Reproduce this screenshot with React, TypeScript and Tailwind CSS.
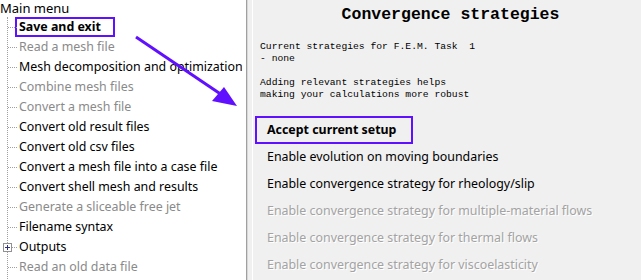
import React from "react";

const items: { t: string; d?: boolean; b?: boolean; plus?: boolean }[] = [
  { t: "Save and exit", b: true },
  { t: "Read a mesh file", d: true },
  { t: "Mesh decomposition and optimization" },
  { t: "Combine mesh files", d: true },
  { t: "Convert a mesh file", d: true },
  { t: "Convert old result files" },
  { t: "Convert old csv files" },
  { t: "Convert a mesh file into a case file" },
  { t: "Convert shell mesh and results" },
  { t: "Generate a sliceable free jet", d: true },
  { t: "Filename syntax" },
  { t: "Outputs", plus: true },
  { t: "Read an old data file", d: true },
];

const opts: { t: string; d?: boolean }[] = [
  { t: "Enable evolution on moving boundaries" },
  { t: "Enable convergence strategy for rheology/slip" },
  { t: "Enable convergence strategy for multiple-material flows", d: true },
  { t: "Enable convergence strategy for thermal flows", d: true },
  { t: "Enable convergence strategy for viscoelasticity", d: true },
];

export default function App() {
  return (
    <div
      className="relative flex h-[280px] w-[641px] overflow-hidden bg-[#f0f0f0] text-[12.4px] text-black"
      style={{ fontFamily: '"Noto Sans", "Open Sans", sans-serif' }}
    >
      <div className="w-[246px] shrink-0 bg-white">
        <div className="h-[17px] pl-0 text-[13px] leading-[17px]">Main menu</div>
        <div className="relative">
          <div className="absolute left-[7px] top-0 h-[280px] border-l border-dotted border-[#a0a0a0]" />
          {items.map((it, i) => (
            <div key={i} className="relative flex h-[20px] items-center">
              <div className="absolute left-[8px] top-[10px] w-[9px] border-t border-dotted border-[#a0a0a0]" />
              {it.plus && (
                <div className="absolute left-[3px] top-[6px] flex h-[9px] w-[9px] items-center justify-center border border-[#919191] bg-white">
                  <div className="absolute h-[1px] w-[5px] bg-[#303080]" />
                  <div className="absolute h-[5px] w-[1px] bg-[#303080]" />
                </div>
              )}
              {it.b ? (
                <div className="ml-[15px] flex h-[20px] w-[100px] items-center border-2 border-[#5f10ff] pl-[2px] font-bold">
                  {it.t}
                </div>
              ) : (
                <div className={"ml-[19px] whitespace-nowrap " + (it.d ? "text-[#8a8a8a]" : "")}>{it.t}</div>
              )}
            </div>
          ))}
        </div>
      </div>
      <div className="w-[1px] shrink-0 bg-[#a0a0a0]" />
      <div className="w-[1px] shrink-0 bg-[#d8d8d8]" />
      <div className="w-[4px] shrink-0" />
      <div className="w-[1px] shrink-0 bg-white" />
      <div className="flex-1 pl-[2px]">
        <div
          className="mt-[6px] pl-[5px] text-center text-[16.5px] font-bold leading-[18px]"
          style={{ fontFamily: '"Liberation Mono", monospace' }}
        >
          Convergence strategies
        </div>
        <div
          className="mt-[17px] whitespace-pre pl-[5px] text-[9.7px] leading-[12px]"
          style={{ fontFamily: '"Liberation Mono", monospace' }}
        >
          {"Current strategies for F.E.M. Task  1\n- none\n\nAdding relevant strategies helps\nmaking your calculations more robust"}
        </div>
        <div className="mt-[15px] flex h-[28px] w-[158px] items-center border-2 border-[#5f10ff] pl-[10px] font-bold">
          Accept current setup
        </div>
        {opts.map((o, i) => (
          <div
            key={i}
            className={"flex h-[27px] items-center whitespace-nowrap pl-[12px] " + (o.d ? "text-[#a3a3a3]" : "")}
            style={o.d ? { textShadow: "1px 1px 0 #ffffff" } : undefined}
          >
            {o.t}
          </div>
        ))}
      </div>
      <svg className="absolute left-0 top-0" width="641" height="280" viewBox="0 0 641 280">
        <line x1="136" y1="37" x2="222" y2="95" stroke="#6010ff" strokeWidth="3" />
        <polygon points="237,106 212,101 224,87" fill="#6010ff" />
      </svg>
    </div>
  );
}
